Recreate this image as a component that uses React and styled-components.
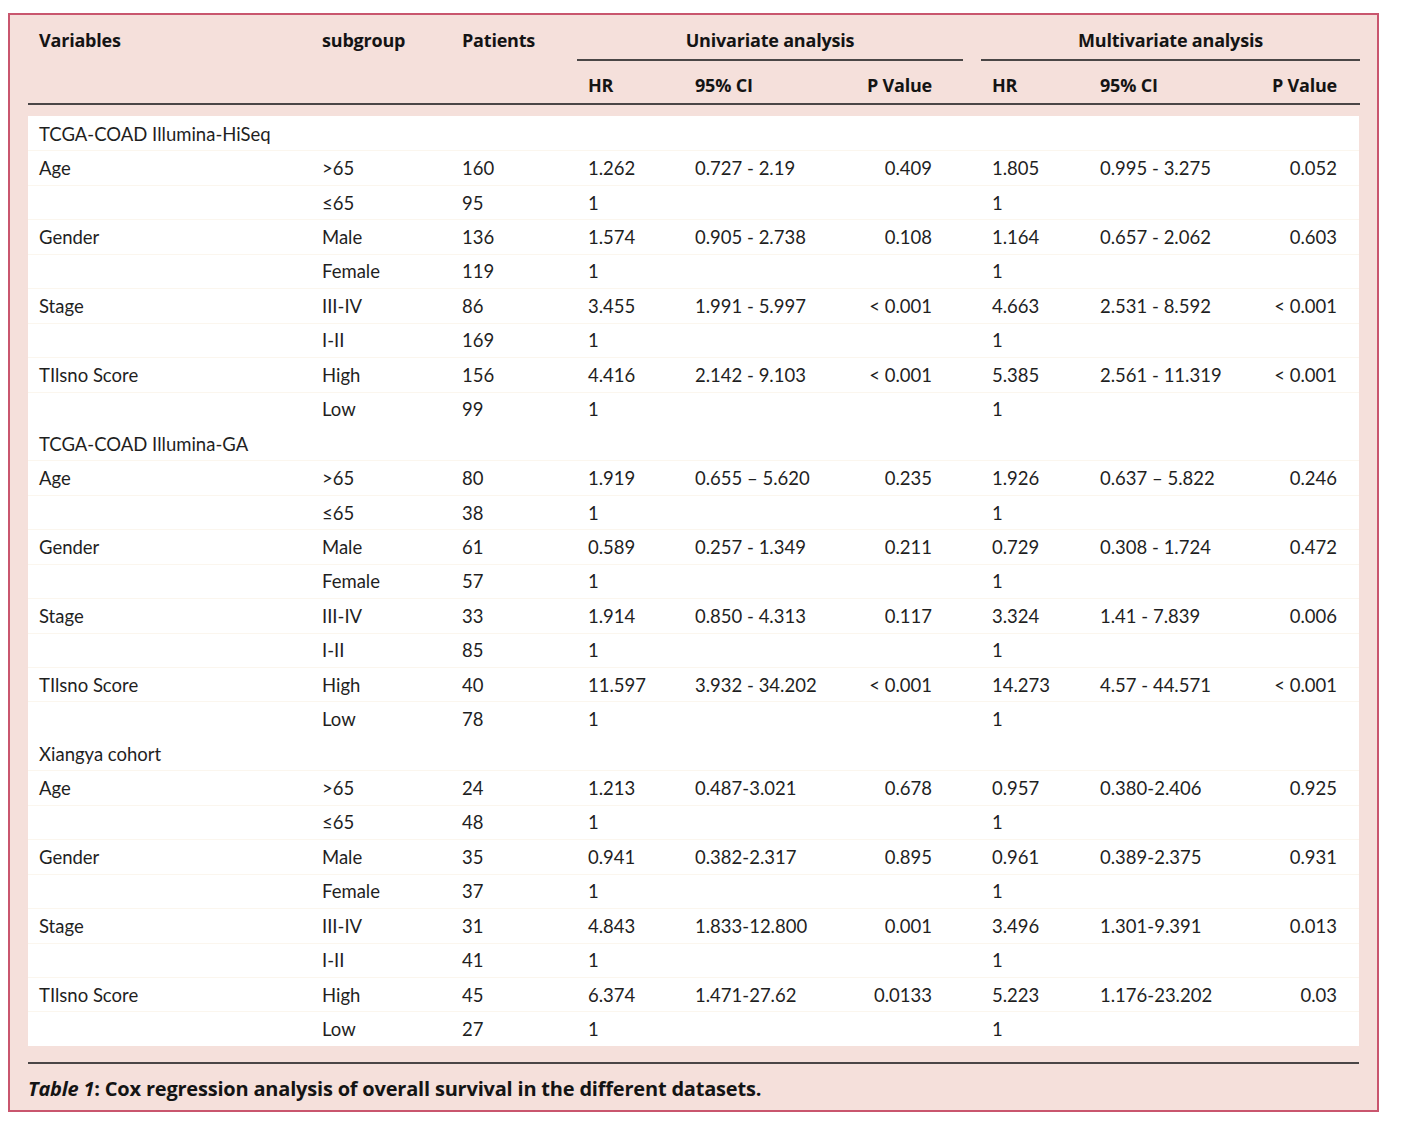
import styled, { createGlobalStyle } from 'styled-components'

const GlobalStyle = createGlobalStyle`
  body {
    margin: 0;
    background: #ffffff;
    font-family: Lato, "Open Sans", sans-serif;
  }
`

const COLS = '283px 140px 126px 107px 166px 131px 108px 161px 110px'
const BOLD_FONT = '"Open Sans", Lato, sans-serif'

const sections = [
  {
    title: 'TCGA-COAD Illumina-HiSeq',
    rows: [
      ['Age', '>65', '160', '1.262', '0.727 - 2.19', '0.409', '1.805', '0.995 - 3.275', '0.052'],
      ['', '≤65', '95', '1', '', '', '1', '', ''],
      ['Gender', 'Male', '136', '1.574', '0.905 - 2.738', '0.108', '1.164', '0.657 - 2.062', '0.603'],
      ['', 'Female', '119', '1', '', '', '1', '', ''],
      ['Stage', 'III-IV', '86', '3.455', '1.991 - 5.997', '< 0.001', '4.663', '2.531 - 8.592', '< 0.001'],
      ['', 'I-II', '169', '1', '', '', '1', '', ''],
      ['TIlsno Score', 'High', '156', '4.416', '2.142 - 9.103', '< 0.001', '5.385', '2.561 - 11.319', '< 0.001'],
      ['', 'Low', '99', '1', '', '', '1', '', ''],
    ],
  },
  {
    title: 'TCGA-COAD Illumina-GA',
    rows: [
      ['Age', '>65', '80', '1.919', '0.655 \u2013 5.620', '0.235', '1.926', '0.637 \u2013 5.822', '0.246'],
      ['', '≤65', '38', '1', '', '', '1', '', ''],
      ['Gender', 'Male', '61', '0.589', '0.257 - 1.349', '0.211', '0.729', '0.308 - 1.724', '0.472'],
      ['', 'Female', '57', '1', '', '', '1', '', ''],
      ['Stage', 'III-IV', '33', '1.914', '0.850 - 4.313', '0.117', '3.324', '1.41 - 7.839', '0.006'],
      ['', 'I-II', '85', '1', '', '', '1', '', ''],
      ['TIlsno Score', 'High', '40', '11.597', '3.932 - 34.202', '< 0.001', '14.273', '4.57 - 44.571', '< 0.001'],
      ['', 'Low', '78', '1', '', '', '1', '', ''],
    ],
  },
  {
    title: 'Xiangya cohort',
    rows: [
      ['Age', '>65', '24', '1.213', '0.487-3.021', '0.678', '0.957', '0.380-2.406', '0.925'],
      ['', '≤65', '48', '1', '', '', '1', '', ''],
      ['Gender', 'Male', '35', '0.941', '0.382-2.317', '0.895', '0.961', '0.389-2.375', '0.931'],
      ['', 'Female', '37', '1', '', '', '1', '', ''],
      ['Stage', 'III-IV', '31', '4.843', '1.833-12.800', '0.001', '3.496', '1.301-9.391', '0.013'],
      ['', 'I-II', '41', '1', '', '', '1', '', ''],
      ['TIlsno Score', 'High', '45', '6.374', '1.471-27.62', '0.0133', '5.223', '1.176-23.202', '0.03'],
      ['', 'Low', '27', '1', '', '', '1', '', ''],
    ],
  },
]

// columns whose values sit flush right
const rightCols = [5, 8]
const padRight = { 5: '49px', 8: '23px' }

const App = () => {
  return (
    <>
      <GlobalStyle />
      <Page>
        <Frame>
          <HeadGrid>
            <HeadCell $span="1 / 3" $col="1">Variables</HeadCell>
            <HeadCell $span="1 / 3" $col="2">subgroup</HeadCell>
            <HeadCell $span="1 / 3" $col="3">Patients</HeadCell>
            <GroupCell $col="4 / 7" $trim="18px">Univariate analysis</GroupCell>
            <GroupCell $col="7 / 10" $trim="0px">Multivariate analysis</GroupCell>
            <SubHead $col="4">HR</SubHead>
            <SubHead $col="5">95% CI</SubHead>
            <SubHead $col="6" $right $pr="49px">P Value</SubHead>
            <SubHead $col="7">HR</SubHead>
            <SubHead $col="8">95% CI</SubHead>
            <SubHead $col="9" $right $pr="23px">P Value</SubHead>
            <HeadRule />
          </HeadGrid>

          <Body>
            {sections.map(section => (
              <div key={section.title}>
                <Row>
                  <SectionTitle>{section.title}</SectionTitle>
                </Row>
                {section.rows.map((row, i) => (
                  <Row key={i}>
                    {row.map((cell, j) => (
                      <Cell
                        key={j}
                        $right={rightCols.includes(j)}
                        $pr={padRight[j]}
                      >
                        {cell}
                      </Cell>
                    ))}
                  </Row>
                ))}
              </div>
            ))}
          </Body>

          <Caption>
            <em>Table 1</em>: Cox regression analysis of overall survival in the different datasets.
          </Caption>
        </Frame>
      </Page>
    </>
  )
}

export default App

const Page = styled.div`
  padding: 13px 0 12px 8px;
`
const Frame = styled.div`
  width: 1331px;
  padding: 0 18px;
  background-color: #f5e0db;
  border: 2px solid #c9566e;
  color: #1f1f1f;
`
const HeadGrid = styled.div`
  display: grid;
  grid-template-columns: ${COLS};
  grid-template-rows: 46px 44px;
  padding-bottom: 11px;
  font-family: ${BOLD_FONT};
  font-size: 18px;
  line-height: 24px;
  font-weight: 700;
  color: #141414;
  letter-spacing: -0.2px;
`
const HeadCell = styled.div`
  grid-row: ${p => p.$span};
  grid-column: ${p => p.$col};
  padding: 13px 11px 0;
`
const GroupCell = styled.div`
  grid-row: 1;
  grid-column: ${p => p.$col};
  margin-right: ${p => p.$trim};
  padding-top: 13px;
  text-align: center;
  border-bottom: 2px solid #4a4646;
  box-sizing: border-box;
  height: 46px;
`
const SubHead = styled.div`
  grid-row: 2;
  grid-column: ${p => p.$col};
  padding: 12px ${p => p.$pr || '11px'} 0 11px;
  text-align: ${p => (p.$right ? 'right' : 'left')};
  border-bottom: 2px solid #4a4646;
  box-sizing: border-box;
  height: 44px;
`
const HeadRule = styled.div`
  grid-row: 2;
  grid-column: 1 / 4;
  border-bottom: 2px solid #4a4646;
`
const Body = styled.div`
  background-color: #ffffff;
  font-size: 18.5px;
  color: #1f1f1f;
`
const Row = styled.div`
  display: grid;
  grid-template-columns: ${COLS};
  height: 34.45px;
  align-items: center;
  border-top: 1px solid #fbf6ee;
  box-sizing: border-box;
  &:first-child {
    border-top-color: transparent;
  }
`
const SectionTitle = styled.div`
  grid-column: 1 / 10;
  padding: 0 11px;
`
const Cell = styled.div`
  padding: 0 ${p => p.$pr || '11px'} 0 11px;
  text-align: ${p => (p.$right ? 'right' : 'left')};
  line-height: 24px;
  white-space: nowrap;
`
const Caption = styled.div`
  margin-top: 16px;
  border-top: 2px solid #4a4646;
  padding: 13px 0 9px;
  font-family: ${BOLD_FONT};
  font-size: 20px;
  line-height: 24px;
  font-weight: 700;
  color: #141414;
  letter-spacing: -0.2px;
`
